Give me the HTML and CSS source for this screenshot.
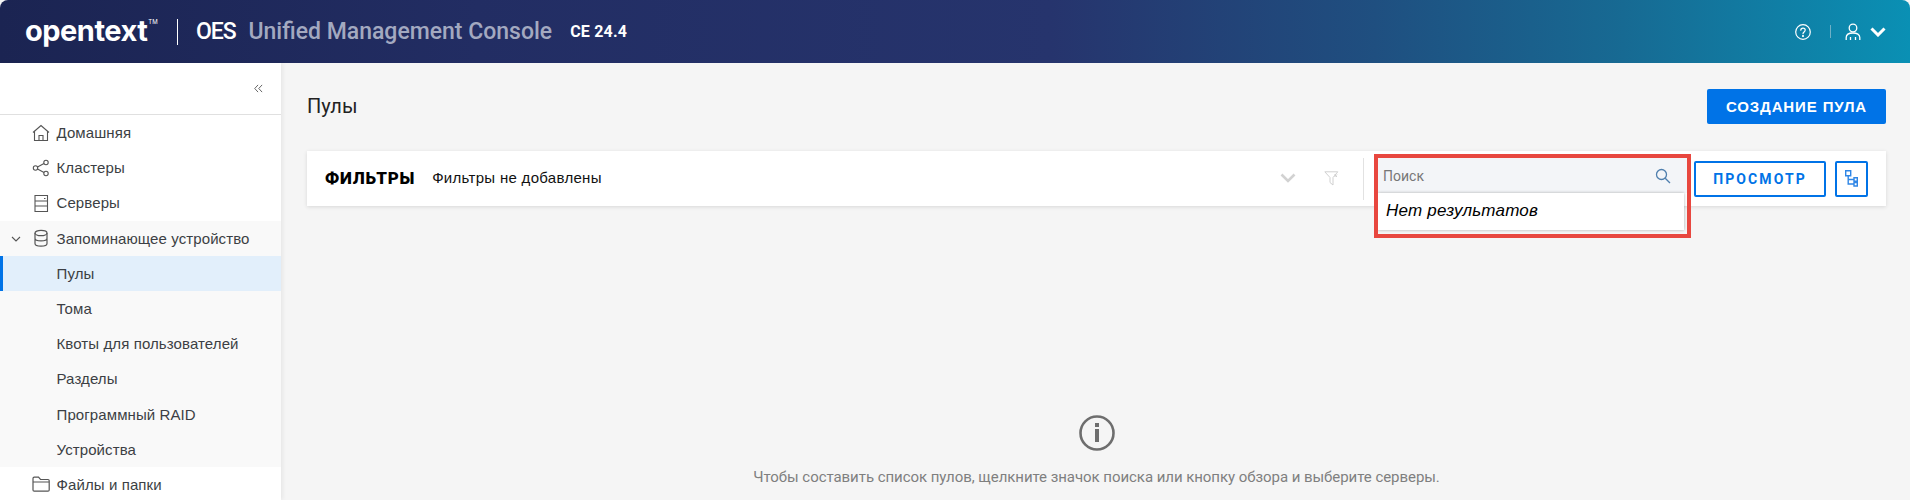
FILE: index.html
```html
<!DOCTYPE html>
<html lang="ru">
<head>
<meta charset="utf-8">
<title>OES Unified Management Console</title>
<link rel="stylesheet" href="styles.css">
</head>
<body>
<header class="topbar">
  <div class="logo">opentext<sup class="tm">TM</sup></div>
  <span class="logo-sep"></span>
  <div class="product"><b>OES</b> <span class="product-name">Unified Management Console</span></div>
  <div class="version">CE 24.4</div>
  <div class="top-actions">
    <svg class="ico-help" width="18" height="18" viewBox="0 0 18 18" fill="none" stroke="#fff" stroke-width="1.2"><circle cx="9" cy="9" r="7.3"/><path d="M6.8 7.2c0-1.3 1-2.1 2.2-2.1s2.2.8 2.2 2c0 1.9-2.2 1.8-2.2 3.6" stroke-linecap="round"/><circle cx="9" cy="13" r=".5" fill="#fff"/></svg>
    <span class="top-sep"></span>
    <svg class="ico-user" width="16" height="18" viewBox="0 0 16 18" fill="none" stroke="#fff" stroke-width="1.3"><circle cx="8" cy="5" r="3.8"/><path d="M1.2 17v-2.5C1.2 11.500 4 10 8 10s6.800 1.500 6.800 4.500V17M5.500 14v3M10.500 14v3"/></svg>
    <svg class="ico-caret" width="16" height="10" viewBox="0 0 16 10" fill="none" stroke="#fff" stroke-width="3"><path d="M1.500 1.500 8 8l6.500-6.500"/></svg>
  </div>
</header>
<div class="shell">
  <aside class="sidebar">
    <div class="collapse">
      <svg width="9" height="9" viewBox="0 0 10 10" fill="none" stroke="#555" stroke-width="1"><path d="M4.500 1 .8 5l3.700 4M9 1 5.300 5 9 9"/></svg>
    </div>
    <nav class="nav">
      <a class="nav-row"><svg class="nav-ico" width="18" height="18" viewBox="0 0 18 18" fill="none" stroke="#555" stroke-width="1.100"><path d="M1 8.500 9 1.500l8 7M2.500 7.500V16.500h13V7.500M7 16.500v-5h4v5"/></svg>Домашняя</a>
      <a class="nav-row"><svg class="nav-ico" width="18" height="18" viewBox="0 0 18 18" fill="none" stroke="#555" stroke-width="1.100"><circle cx="3.500" cy="9" r="2.200"/><circle cx="14" cy="3.500" r="2.200"/><circle cx="14" cy="14.500" r="2.200"/><path d="M5.500 8 12 4.500M5.500 10 12 13.500"/></svg>Кластеры</a>
      <a class="nav-row"><svg class="nav-ico" width="18" height="18" viewBox="0 0 18 18" fill="none" stroke="#555" stroke-width="1.100"><path d="M3 1.500h12.500v16H3zM3 7h12.500M3 12h12.500M12 4.500h1.500"/></svg>Серверы</a>
      <div class="nav-group">
        <a class="nav-row"><svg class="nav-caret" width="10" height="6" viewBox="0 0 10 6" fill="none" stroke="#555" stroke-width="1.100"><path d="M1 1l4 4 4-4"/></svg><svg class="nav-ico" width="18" height="18" viewBox="0 0 18 18" fill="none" stroke="#555" stroke-width="1.200"><ellipse cx="9" cy="4" rx="6" ry="2.700"/><path d="M3 4v10.500c0 1.500 2.700 2.700 6 2.700s6-1.200 6-2.700V4M3 9.200c0 1.500 2.700 2.700 6 2.700s6-1.200 6-2.700"/></svg>Запоминающее устройство</a>
        <a class="nav-row sub active">Пулы</a>
        <a class="nav-row sub">Тома</a>
        <a class="nav-row sub">Квоты для пользователей</a>
        <a class="nav-row sub">Разделы</a>
        <a class="nav-row sub">Программный RAID</a>
        <a class="nav-row sub">Устройства</a>
      </div>
      <a class="nav-row"><svg class="nav-ico" width="18" height="16" viewBox="0 0 18 16" fill="none" stroke="#555" stroke-width="1.200"><path d="M1 14V2.500C1 1.700 1.500 1.200 2.300 1.200h4.200L8.500 3.500h7.500c.7 0 1.200.5 1.200 1.200V14c0 .7-.5 1.200-1.200 1.200H2.200C1.500 15.200 1 14.700 1 14zM1 6h16.200"/></svg>Файлы и папки</a>
    </nav>
  </aside>
  <main class="main">
    <div class="title-row">
      <h1 class="title">Пулы</h1>
      <button class="btn-primary">СОЗДАНИЕ ПУЛА</button>
    </div>
    <section class="filters">
      <span class="filters-label">ФИЛЬТРЫ</span>
      <span class="filters-state">Фильтры не добавлены</span>
      <svg class="filters-chev" width="16" height="10" viewBox="0 0 16 10" fill="none" stroke="#d2d2d2" stroke-width="2.600"><path d="M1.500 1.500 8 8l6.500-6.500"/></svg>
      <svg class="filters-funnel" width="15" height="15" viewBox="0 0 15 15" fill="none" stroke="#d0d0d0" stroke-width="1"><path d="M.8 .8h13L9 6.500v7.500L6 11.500V6.500zM10.500 3.500l2.500 2.500M13 3.500 10.500 6"/></svg>
      <span class="filters-sep"></span>
      <div class="search">
        <div class="search-input">
          <span class="search-ph">Поиск</span>
          <svg width="16" height="16" viewBox="0 0 16 16" fill="none" stroke="#4f7fae" stroke-width="1.300"><circle cx="6.500" cy="6.500" r="5"/><path d="M10.200 10.200 15 15"/></svg>
        </div>
        <div class="search-drop">Нет результатов</div>
        <div class="callout"></div>
      </div>
      <button class="btn-outline">ПРОСМОТР</button>
      <button class="btn-tree"><svg width="13" height="17" viewBox="0 0 13 17" fill="none" stroke="#2f86e6" stroke-width="1.400"><path d="M.7 .7h5v5h-5zM3.200 5.700V14H9M3.200 9.500H9M9 7.700h3.300v3.500H9zM9 12.500h3.300V16H9z"/></svg></button>
    </section>
    <div class="empty">
      <svg width="36" height="36" viewBox="0 0 36 36" fill="none"><circle cx="18" cy="18" r="16.500" stroke="#6e6e6e" stroke-width="2.600"/><rect x="16" y="14" width="4" height="13" fill="#6e6e6e"/><rect x="16" y="8" width="4" height="4" fill="#6e6e6e"/></svg>
      <p class="empty-text">Чтобы составить список пулов, щелкните значок поиска или кнопку обзора и выберите серверы.</p>
    </div>
  </main>
</div>
</body>
</html>
```

FILE: styles.css
```css
* { box-sizing: border-box; }
html, body { margin: 0; height: 100%; overflow: hidden; }
body {
  font-family: "Liberation Sans", Arial, sans-serif;
  background: #f5f5f5;
  display: flex;
  flex-direction: column;
  color: #333;
}
.topbar {
  height: 63px;
  flex: none;
  display: flex;
  align-items: center;
  padding: 0 24px 0 25px;
  color: #fff;
  border-radius: 8px 8px 0 0;
  background: linear-gradient(90deg, #1b2452 0%, #222d63 25%, #26346d 55%, #1f4f80 72%, #176a93 85%, #0a90b4 100%);
}
.logo {
  font-family: Inter, "Liberation Sans", sans-serif;
  font-weight: 700;
  font-size: 29px;
  letter-spacing: -0.5px;
  width: 152px;
  line-height: 1;
  margin-top: -3px;
}
.tm { font-size: 6px; font-weight: 400; vertical-align: top; letter-spacing: 0; margin-left: 1px; position: relative; top: 3px; }
.logo-sep { width: 1px; height: 26px; background: #fff; }
.product { margin-left: 18px; font: 500 23px Roboto, sans-serif; }
.product b { font-weight: 500; letter-spacing: -1px; }
.product-name { color: #a3a9c0; margin-left: 7px; }
.version { margin-left: 18px; font: 700 16px Roboto, sans-serif; letter-spacing: .2px; }
.top-actions { margin-left: auto; display: flex; align-items: center; }
.top-sep { width: 1px; height: 13px; background: #6fb0c6; margin: 0 14px 0 18px; }
.ico-user { margin-right: 9px; }
.shell { flex: 1; display: flex; min-height: 0; }
.sidebar {
  width: 281px;
  flex: none;
  background: #fff;
  box-shadow: 2px 0 4px rgba(0,0,0,.06);
}
.collapse {
  height: 52px;
  border-bottom: 1px solid #e0e0e0;
  display: flex;
  justify-content: flex-end;
  align-items: center;
  padding: 0 18px 0 0;
}
.nav-row {
  height: 35.2px;
  display: flex;
  align-items: center;
  padding-left: 56.5px;
  font-size: 15px;
  letter-spacing: .1px;
  color: #3c3f44;
  position: relative;
}
.nav-ico { position: absolute; left: 32px; top: 50%; transform: translateY(-50%); }
.nav-caret { position: absolute; left: 11px; top: 15px; }
.nav-group { background: #f9f9f9; }
.active { background: #e2effb; border-left: 3px solid #0073e7; padding-left: 53.5px; }
.main { flex: 1; min-width: 0; padding: 26px 24px 0 26px; }
.title-row { display: flex; justify-content: space-between; align-items: center; height: 35px; }
.title { margin: 0 0 2px; font: 400 20px Roboto, sans-serif; color: #222; }
.btn-primary {
  width: 179px;
  height: 35px;
  background: #0073e7;
  color: #fff;
  border: 0;
  border-radius: 2px;
  font: 700 15px "Liberation Sans", sans-serif;
  letter-spacing: .87px;
}
.filters {
  margin-top: 27px;
  height: 55px;
  background: #fff;
  display: flex;
  align-items: center;
  padding-left: 18px;
  box-shadow: 0 1px 4px rgba(0,0,0,.12);
}
.filters-label { font: 900 17px Roboto, sans-serif; color: #000; letter-spacing: .8px; margin-bottom: 2px; }
.filters-state { margin-left: 17px; font-size: 15px; letter-spacing: .3px; color: #111; margin-bottom: 2px; }
.filters-chev { margin-left: auto; margin-bottom: 1px; }
.filters-funnel { margin: 0 0 1px 28px; }
.filters-sep { width: 1px; height: 42px; background: #e2e2e2; margin: 0 14px 0 24px; }
.search { position: relative; width: 309px; height: 35px; margin-bottom: 6px; }
.search-input {
  height: 35px;
  background: #f3f5f8;
  display: flex;
  align-items: center;
  justify-content: space-between;
  padding: 0 16px 0 5px;
}
.search-ph { font: 400 14px Roboto, sans-serif; color: #777; }
.search-drop {
  position: absolute;
  left: 0;
  top: 35px;
  width: 306px;
  height: 37px;
  background: #fff;
  box-shadow: 0 0 3px rgba(0,0,0,.3);
  font-size: 17px;
  letter-spacing: .2px;
  font-style: italic;
  color: #000;
  padding: 0 8px;
  line-height: 35px;
}
.callout {
  position: absolute;
  left: -4px;
  top: -4px;
  width: 317px;
  height: 84px;
  border: 4px solid #e8473f;
}
.btn-outline {
  margin-left: 7px;
  width: 132px;
  height: 36px;
  background: #fff;
  border: 2px solid #0073e7;
  border-radius: 2px;
  color: #0073e7;
  font: 700 14px Roboto, sans-serif;
  letter-spacing: 2.100px;
}
.btn-tree {
  margin: 0 18px 0 9px;
  width: 33px;
  height: 36px;
  background: #fff;
  border: 2px solid #0073e7;
  border-radius: 2px;
  padding: 0;
  display: flex;
  align-items: center;
  justify-content: center;
}
.empty { margin-top: 209px; display: flex; flex-direction: column; align-items: center; }
.empty-text { margin: 17px 0 0; font: 400 15px Roboto, sans-serif; letter-spacing: -.05px; color: #7f7f7f; }
```
